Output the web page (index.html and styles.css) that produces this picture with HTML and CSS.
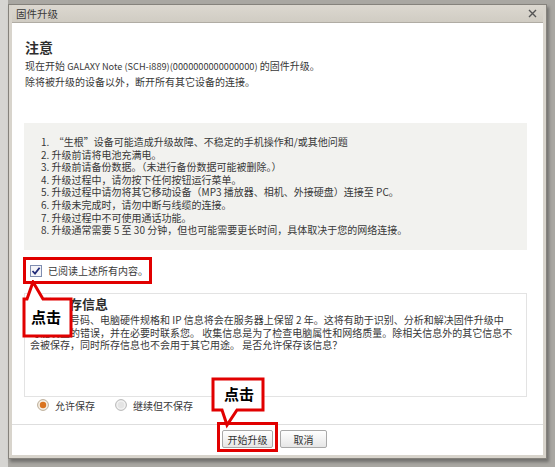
FILE: index.html
```html
<!DOCTYPE html>
<html lang="zh-CN">
<head>
    <meta charset="UTF-8">
    <meta name="viewport" content="width=device-width, initial-scale=1.0">
    <title>固件升级</title>
    <link rel="stylesheet" href="styles.css">
</head>
<body>
    <div class="window">
        <div class="titlebar">
            <span class="title">固件升级</span>
            <svg class="close" width="9" height="9" viewBox="0 0 9 9">
                <path d="M1 1 L8 8 M8 1 L1 8" stroke="#555" stroke-width="1.4" fill="none"/>
            </svg>
        </div>

        <div class="content">
            <h2 class="heading">注意</h2>
            <p class="intro">现在开始 <span class="model">GALAXY Note (SCH-i889)(0000000000000000)</span> 的固件升级。<br>除将被升级的设备以外，断开所有其它设备的连接。</p>

            <ol class="notes">
                <li>1.&nbsp;&nbsp;“生根”设备可能造成升级故障、不稳定的手机操作和/或其他问题</li>
                <li>2. 升级前请将电池充满电。</li>
                <li>3. 升级前请备份数据。（未进行备份数据可能被删除。）</li>
                <li>4. 升级过程中，请勿按下任何按钮运行菜单。</li>
                <li>5. 升级过程中请勿将其它移动设备（MP3 播放器、相机、外接硬盘）连接至 PC。</li>
                <li>6. 升级未完成时，请勿中断与线缆的连接。</li>
                <li>7. 升级过程中不可使用通话功能。</li>
                <li>8. 升级通常需要 5 至 30 分钟，但也可能需要更长时间，具体取决于您的网络连接。</li>
            </ol>

            <label class="agree marked">
                <svg class="checkbox" width="12" height="12" viewBox="0 0 12 12">
                    <rect x="0.5" y="0.5" width="11" height="11" fill="#f4f4f8" stroke="#7f8db0"/>
                    <path d="M2.5 6 L5 8.6 L9.6 2.8" stroke="#1f2a78" stroke-width="1.8" fill="none"/>
                </svg>
                <span>已阅读上述所有内容。</span>
            </label>

            <div class="info">
                <h3 class="info-title">收集保存信息</h3>
                <p class="info-text">设备序列号码、电脑硬件规格和 IP 信息将会在服务器上保留 2 年。这将有助于识别、分析和解决固件升级中<br>可能发生的错误，并在必要时联系您。 收集信息是为了检查电脑属性和网络质量。除相关信息外的其它信息不<br>会被保存，同时所存信息也不会用于其它用途。 是否允许保存该信息？</p>
            </div>

            <div class="choices">
                <span class="choice">
                    <svg width="12" height="12" viewBox="0 0 12 12">
                        <circle cx="6" cy="6" r="5.4" fill="#f6efe4" stroke="#b9ab96"/>
                        <circle cx="6" cy="6" r="3.2" fill="#d9731f"/>
                    </svg>
                    允许保存
                </span>
                <span class="choice">
                    <svg width="12" height="12" viewBox="0 0 12 12">
                        <circle cx="6" cy="6" r="5.4" fill="#f1f1f1" stroke="#b5b5b5"/>
                        <circle cx="6" cy="6" r="3.2" fill="#e4e4e4"/>
                    </svg>
                    继续但不保存
                </span>
            </div>
        </div>

        <div class="actions">
            <button class="btn marked-btn">开始升级</button>
            <button class="btn">取消</button>
        </div>

        <div class="callout callout-left">
            <svg width="52" height="60" viewBox="0 0 52 60">
                <path d="M2 19 L5 19 L11 2 L21 19 L49 19 L49 56 L2 56 Z" fill="#fff" stroke="#e10000" stroke-width="3" stroke-linejoin="miter"/>
            </svg>
            <span class="callout-text">点击</span>
        </div>

        <div class="callout callout-bottom">
            <svg width="56" height="52" viewBox="0 0 56 52">
                <path d="M2 2 L52 2 L52 33 L26 33 L16 48 L11 33 L2 33 Z" fill="#fff" stroke="#e10000" stroke-width="3" stroke-linejoin="miter"/>
            </svg>
            <span class="callout-text">点击</span>
        </div>
    </div>
</body>
</html>
```

FILE: styles.css
```css
* {
    margin: 0;
    padding: 0;
    box-sizing: border-box;
}

body {
    font-family: "Noto Sans CJK SC", sans-serif;
    font-size: 10px;
    color: #383838;
    background: linear-gradient(90deg, #d6d5d2 0px, #d6d5d2 8px, #a9a7a2 8px);
    height: 467px;
    overflow: hidden;
}

.window {
    position: relative;
    margin: 4px 0 0 8px;
    width: 539px;
    height: 455px;
    border: 1px solid #85827c;
    background: #d8d4cc;
    padding: 0 3px 3px 3px;
    display: flex;
    flex-direction: column;
    box-shadow: 2px 3px 3px rgba(60, 60, 60, 0.5);
}

.titlebar {
    height: 18px;
    display: flex;
    align-items: center;
    justify-content: space-between;
    padding: 0 6px 0 4px;
    background: linear-gradient(#dcd8d0, #d0ccc3);
    border-bottom: 1px solid #b0aca4;
}

.title {
    font-size: 10.5px;
    color: #3a3a3a;
}

.close {
    display: block;
}

.content {
    background: #fff;
    padding: 16px 16px 0 12px;
    white-space: nowrap;
}

.heading {
    font-size: 14px;
    font-weight: bold;
    line-height: 16px;
    padding-left: 1px;
    color: #2e2e2e;
}

.intro {
    margin-top: 3px;
    padding-left: 1px;
    line-height: 15px;
}

.model {
    font-size: 9.2px;
}

.notes {
    list-style: none;
    margin-top: 34px;
    height: 127px;
    background: #f2f2ef;
    padding: 13px 0 0 17px;
    line-height: 12.6px;
}

.agree {
    position: relative;
    display: inline-flex;
    align-items: center;
    gap: 6px;
    height: 21px;
    margin: 10px 0 0 2px;
    padding: 0 1px 0 4px;
}

.checkbox {
    display: block;
}

.marked {
    outline: 3px solid #e10000;
}

.info {
    margin-top: 12px;
    height: 104px;
    border: 1px solid #e3e3e3;
    padding: 2px 0 0 5px;
}

.info-title {
    font-size: 13px;
    font-weight: bold;
    line-height: 16px;
    color: #2e2e2e;
}

.info-text {
    margin-top: 2px;
    line-height: 12.5px;
}

.choices {
    display: flex;
    gap: 20px;
    height: 14px;
    margin: 1px -16px 0 -12px;
    padding: 0 0 12px 25px;
    box-sizing: content-box;
    border-bottom: 1px solid #dedede;
}

.choice {
    display: inline-flex;
    align-items: center;
    gap: 6px;
}

.actions {
    flex: 1;
    background: #fff;
    display: flex;
    gap: 7px;
    padding: 5px 0 0 210px;
}

.btn {
    position: relative;
    font-family: "Noto Sans CJK SC", sans-serif;
    font-size: 10px;
    color: #333;
    height: 18px;
    width: 51px;
    border: 1px solid #a9a9a9;
    border-radius: 2px;
    background: linear-gradient(#ffffff, #e6e6e6);
}

.btn + .btn {
    width: 47px;
}

.marked-btn::after {
    content: '';
    position: absolute;
    left: -6px;
    top: -9px;
    right: -6px;
    bottom: -5px;
    border: 3px solid #e10000;
}

.callout {
    position: absolute;
}

.callout svg {
    display: block;
}

.callout-text {
    position: absolute;
    font-size: 15px;
    font-weight: bold;
    color: #000;
    line-height: 18px;
}

.callout-left {
    left: 13px;
    top: 275px;
}

.callout-left .callout-text {
    left: 9px;
    top: 28px;
}

.callout-bottom {
    left: 202px;
    top: 372px;
}

.callout-bottom .callout-text {
    left: 13px;
    top: 8px;
}
```
